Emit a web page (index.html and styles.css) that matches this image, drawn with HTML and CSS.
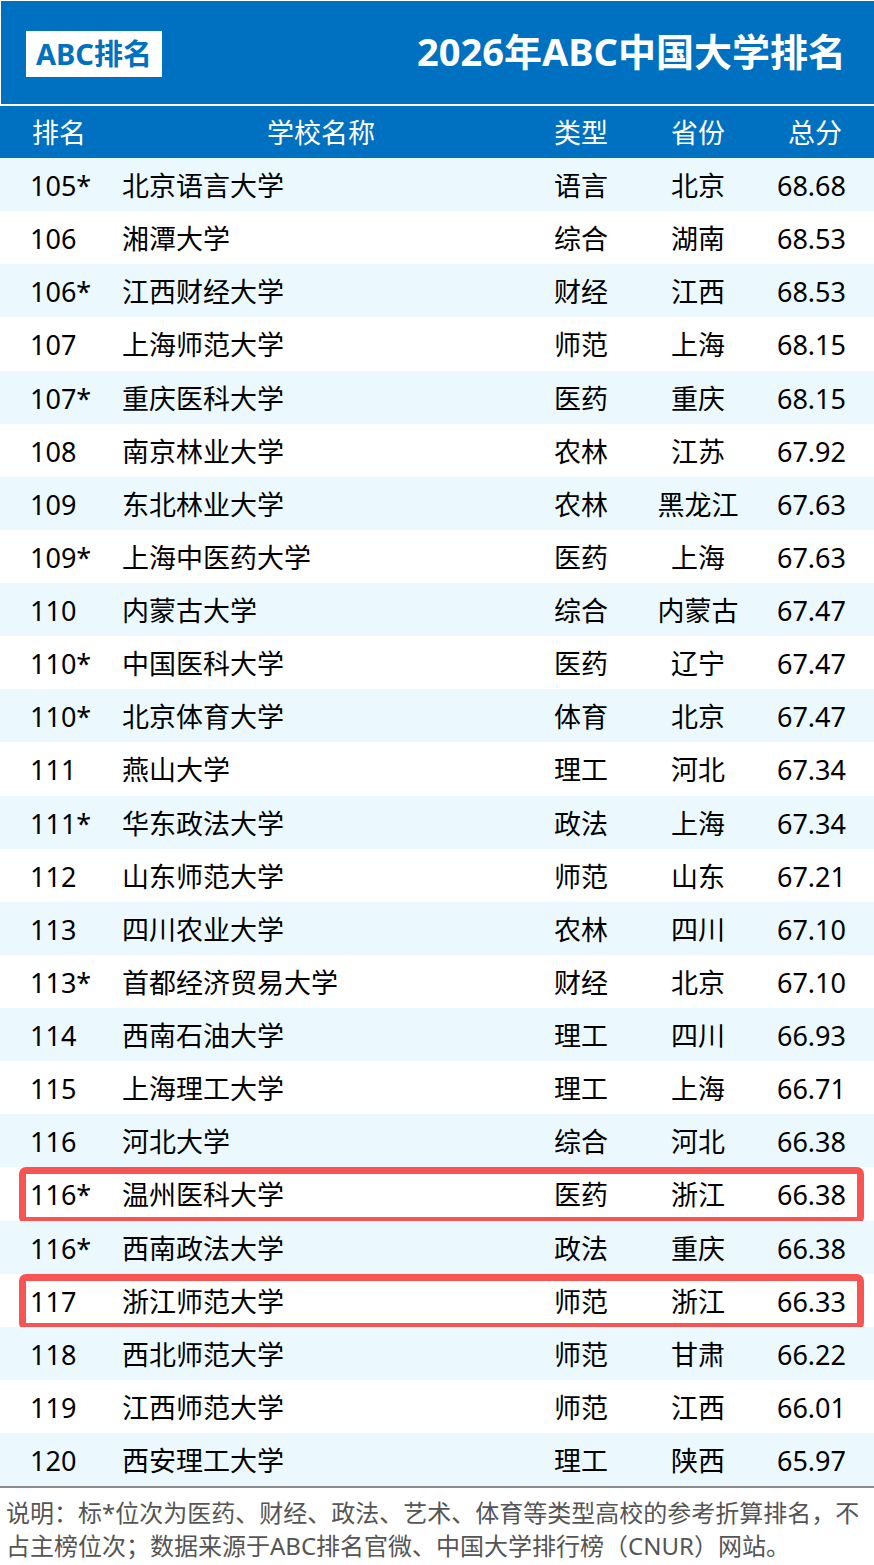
FILE: index.html
```html
<!DOCTYPE html>
<html lang="zh-CN">
<head>
<meta charset="utf-8">
<link rel="stylesheet" href="styles.css">
</head>
<body>
<div class="page">
  <header class="banner">
    <div class="logo">ABC排名</div>
    <h1 class="title">2026年ABC中国大学排名</h1>
  </header>
  <div class="table">
    <div class="row head"><span class="c-rank">排名</span><span class="c-name">学校名称</span><span class="c-type">类型</span><span class="c-prov">省份</span><span class="c-score">总分</span></div>
    <div class="row alt"><span class="c-rank">105*</span><span class="c-name">北京语言大学</span><span class="c-type">语言</span><span class="c-prov">北京</span><span class="c-score">68.68</span></div>
    <div class="row"><span class="c-rank">106</span><span class="c-name">湘潭大学</span><span class="c-type">综合</span><span class="c-prov">湖南</span><span class="c-score">68.53</span></div>
    <div class="row alt"><span class="c-rank">106*</span><span class="c-name">江西财经大学</span><span class="c-type">财经</span><span class="c-prov">江西</span><span class="c-score">68.53</span></div>
    <div class="row"><span class="c-rank">107</span><span class="c-name">上海师范大学</span><span class="c-type">师范</span><span class="c-prov">上海</span><span class="c-score">68.15</span></div>
    <div class="row alt"><span class="c-rank">107*</span><span class="c-name">重庆医科大学</span><span class="c-type">医药</span><span class="c-prov">重庆</span><span class="c-score">68.15</span></div>
    <div class="row"><span class="c-rank">108</span><span class="c-name">南京林业大学</span><span class="c-type">农林</span><span class="c-prov">江苏</span><span class="c-score">67.92</span></div>
    <div class="row alt"><span class="c-rank">109</span><span class="c-name">东北林业大学</span><span class="c-type">农林</span><span class="c-prov">黑龙江</span><span class="c-score">67.63</span></div>
    <div class="row"><span class="c-rank">109*</span><span class="c-name">上海中医药大学</span><span class="c-type">医药</span><span class="c-prov">上海</span><span class="c-score">67.63</span></div>
    <div class="row alt"><span class="c-rank">110</span><span class="c-name">内蒙古大学</span><span class="c-type">综合</span><span class="c-prov">内蒙古</span><span class="c-score">67.47</span></div>
    <div class="row"><span class="c-rank">110*</span><span class="c-name">中国医科大学</span><span class="c-type">医药</span><span class="c-prov">辽宁</span><span class="c-score">67.47</span></div>
    <div class="row alt"><span class="c-rank">110*</span><span class="c-name">北京体育大学</span><span class="c-type">体育</span><span class="c-prov">北京</span><span class="c-score">67.47</span></div>
    <div class="row"><span class="c-rank">111</span><span class="c-name">燕山大学</span><span class="c-type">理工</span><span class="c-prov">河北</span><span class="c-score">67.34</span></div>
    <div class="row alt"><span class="c-rank">111*</span><span class="c-name">华东政法大学</span><span class="c-type">政法</span><span class="c-prov">上海</span><span class="c-score">67.34</span></div>
    <div class="row"><span class="c-rank">112</span><span class="c-name">山东师范大学</span><span class="c-type">师范</span><span class="c-prov">山东</span><span class="c-score">67.21</span></div>
    <div class="row alt"><span class="c-rank">113</span><span class="c-name">四川农业大学</span><span class="c-type">农林</span><span class="c-prov">四川</span><span class="c-score">67.10</span></div>
    <div class="row"><span class="c-rank">113*</span><span class="c-name">首都经济贸易大学</span><span class="c-type">财经</span><span class="c-prov">北京</span><span class="c-score">67.10</span></div>
    <div class="row alt"><span class="c-rank">114</span><span class="c-name">西南石油大学</span><span class="c-type">理工</span><span class="c-prov">四川</span><span class="c-score">66.93</span></div>
    <div class="row"><span class="c-rank">115</span><span class="c-name">上海理工大学</span><span class="c-type">理工</span><span class="c-prov">上海</span><span class="c-score">66.71</span></div>
    <div class="row alt"><span class="c-rank">116</span><span class="c-name">河北大学</span><span class="c-type">综合</span><span class="c-prov">河北</span><span class="c-score">66.38</span></div>
    <div class="row mark"><span class="c-rank">116*</span><span class="c-name">温州医科大学</span><span class="c-type">医药</span><span class="c-prov">浙江</span><span class="c-score">66.38</span></div>
    <div class="row alt"><span class="c-rank">116*</span><span class="c-name">西南政法大学</span><span class="c-type">政法</span><span class="c-prov">重庆</span><span class="c-score">66.38</span></div>
    <div class="row mark"><span class="c-rank">117</span><span class="c-name">浙江师范大学</span><span class="c-type">师范</span><span class="c-prov">浙江</span><span class="c-score">66.33</span></div>
    <div class="row alt"><span class="c-rank">118</span><span class="c-name">西北师范大学</span><span class="c-type">师范</span><span class="c-prov">甘肃</span><span class="c-score">66.22</span></div>
    <div class="row"><span class="c-rank">119</span><span class="c-name">江西师范大学</span><span class="c-type">师范</span><span class="c-prov">江西</span><span class="c-score">66.01</span></div>
    <div class="row alt"><span class="c-rank">120</span><span class="c-name">西安理工大学</span><span class="c-type">理工</span><span class="c-prov">陕西</span><span class="c-score">65.97</span></div>
  </div>
  <p class="note">说明：标*位次为医药、财经、政法、艺术、体育等类型高校的参考折算排名，不<br>占主榜位次；数据来源于ABC排名官微、中国大学排行榜（CNUR）网站。</p>
</div>
</body>
</html>
```

FILE: styles.css
```css
html, body {
  margin: 0;
  padding: 0;
  background: #ffffff;
}

.page {
  width: 874px;
  padding-top: 1px;
  font-family: "Noto Sans", "Noto Sans CJK SC", sans-serif;
  color: #000000;
}

.banner {
  height: 103px;
  margin-left: 1px;
  background: #0070c0;
  display: flex;
  align-items: center;
  justify-content: space-between;
  padding: 0 28px 0 25px;
  margin-bottom: 2px;
}

.logo {
  width: 136px;
  height: 46px;
  margin-top: 2px;
  background: #ffffff;
  color: #0070c0;
  font-weight: 700;
  font-size: 29px;
  line-height: 46px;
  text-align: center;
}

.title {
  margin: 0 0 4px;
  color: #ffffff;
  font-size: 38px;
  font-weight: 700;
  line-height: 1;
}

.table {
  display: flex;
  flex-direction: column;
}

.row {
  position: relative;
  display: grid;
  grid-template-columns: 122px 400px 118px 116px 118px;
  align-items: center;
  height: 53.125px;
  padding-top: 2px;
  box-sizing: border-box;
  font-size: 27px;
  line-height: 1;
  background: #ffffff;
}

.row.alt {
  background: #ebf9fe;
}

.row.head {
  height: 52px;
  padding-top: 1px;
  background: #0070c0;
  color: #ffffff;
}

.c-rank {
  padding-left: 30px;
}

.c-name {
  text-align: left;
}

.c-type {
  text-align: center;
}

.c-prov {
  text-align: center;
}

.c-score {
  text-align: right;
  padding-right: 28px;
}

.head .c-rank {
  padding-left: 32px;
}

.head .c-name {
  text-align: center;
  padding-right: 2px;
}

.head .c-score {
  padding-right: 32px;
}

.row.mark::after {
  content: "";
  position: absolute;
  top: 0;
  bottom: -3px;
  left: 19px;
  right: 10px;
  border: 7px solid #f75454;
  border-radius: 7px;
  pointer-events: none;
}

.note {
  margin: 0;
  border-top: 2px solid #8c8c8c;
  padding: 8px 0 0 6px;
  font-size: 24px;
  line-height: 33px;
  color: #555555;
}
```
